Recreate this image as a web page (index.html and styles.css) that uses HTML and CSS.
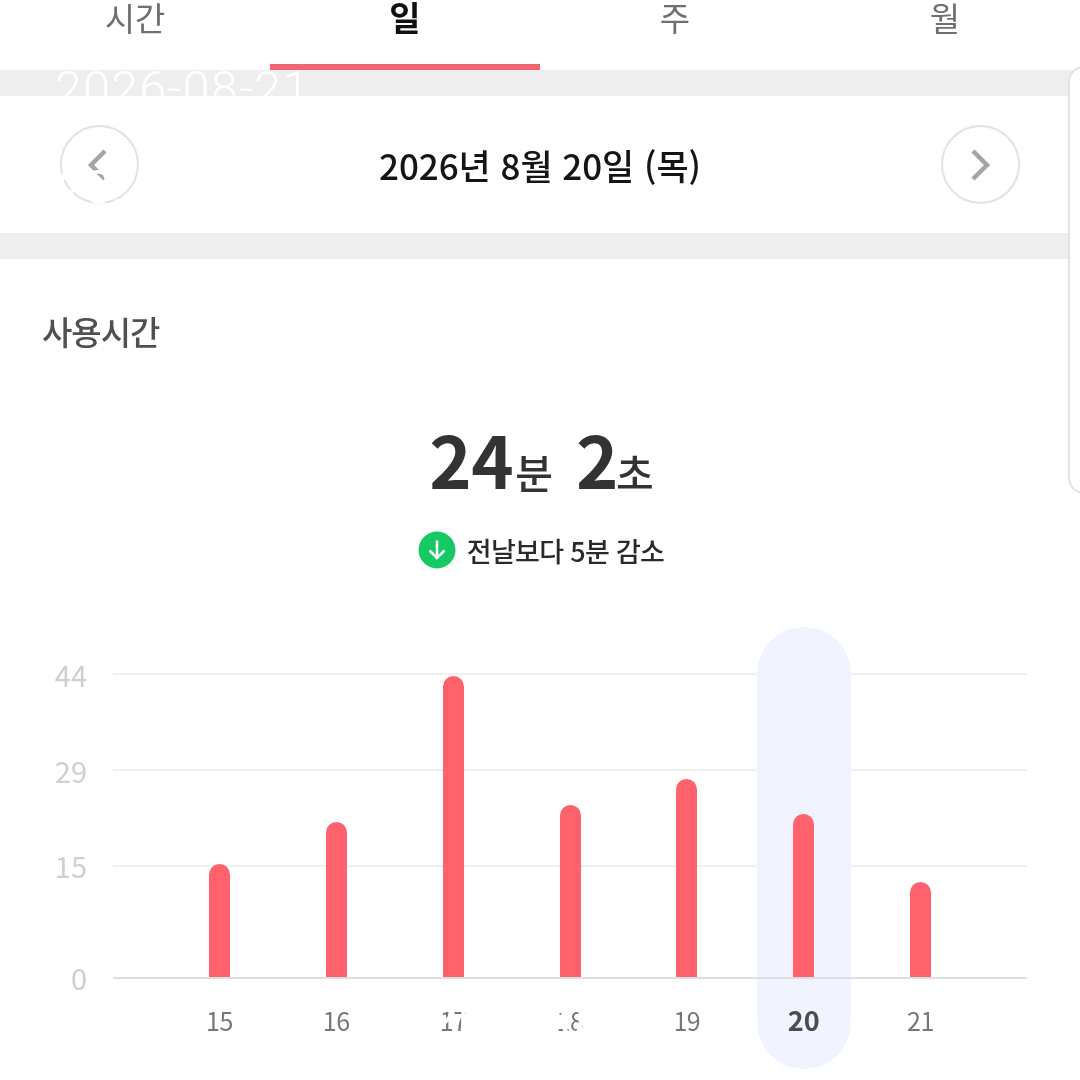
FILE: index.html
```html
<!DOCTYPE html>
<html lang="ko">
<head>
<meta charset="utf-8">
<title>사용시간</title>
<link rel="stylesheet" href="styles.css">
</head>
<body>
<main class="screen">
  <nav class="tabs">
    <div class="tab">시간</div>
    <div class="tab active">일</div>
    <div class="tab">주</div>
    <div class="tab">월</div>
  </nav>
  <div class="band"></div>
  <section class="date-row">
    <button class="nav-btn" aria-label="이전">
      <svg viewBox="0 0 24 32" class="chev chev-left"><path d="M19 2 L5 16 L19 30"/></svg>
    </button>
    <div class="date-text">2026년 8월 20일 (목)</div>
    <button class="nav-btn" aria-label="다음">
      <svg viewBox="0 0 24 32" class="chev"><path d="M5 2 L19 16 L5 30"/></svg>
    </button>
  </section>
  <div class="band"></div>
  <section class="usage">
    <h2 class="usage-title">사용시간</h2>
    <div class="total"><b>24</b><span class="unit-min">분</span> <b class="sec">2</b><span class="unit-sec">초</span></div>
    <div class="delta">
      <svg viewBox="0 0 38 38" class="delta-icon"><circle cx="19" cy="19" r="18.5"/><path d="M19 9.500 V27 M11.500 19.500 L19 27 L26.500 19.500"/></svg>
      <span>전날보다 5분 감소</span>
    </div>
    <div class="chart">
      <div class="y-axis">
        <span class="y-44">44</span>
        <span class="y-29">29</span>
        <span class="y-15">15</span>
        <span class="y-0">0</span>
      </div>
      <div class="plot">
        <div class="grid-line g1"></div>
        <div class="grid-line g2"></div>
        <div class="grid-line g3"></div>
        <div class="grid-line g4"></div>
        <div class="bars">
          <div class="col"><div class="bar-area"><div class="bar" style="height:114px"></div></div><div class="tick">15</div></div>
          <div class="col"><div class="bar-area"><div class="bar" style="height:156px"></div></div><div class="tick">16</div></div>
          <div class="col"><div class="bar-area"><div class="bar" style="height:302px"></div></div><div class="tick">17</div></div>
          <div class="col"><div class="bar-area"><div class="bar" style="height:173px"></div></div><div class="tick">18</div></div>
          <div class="col"><div class="bar-area"><div class="bar" style="height:199px"></div></div><div class="tick">19</div></div>
          <div class="col current"><div class="pill"></div><div class="bar-area"><div class="bar" style="height:164px"></div></div><div class="tick">20</div></div>
          <div class="col"><div class="bar-area"><div class="bar" style="height:96px"></div></div><div class="tick">21</div></div>
        </div>
      </div>
    </div>
  </section>
  <div class="side-panel"></div>
  <div class="wm wm-date">2026-08-21</div>
  <div class="wm wm-time">20:</div>
  <div class="wm wm-low">2026-08-21</div>
</main>
</body>
</html>
```
FILE: styles.css
```css
* { box-sizing: border-box; margin: 0; padding: 0; }
html, body { width: 1080px; height: 1080px; overflow: hidden; background: #fff; }
body { font-family: "Noto Sans CJK KR", "Noto Sans", sans-serif; }
.screen { position: relative; width: 1080px; height: 1080px; overflow: hidden; background: #fff; filter: blur(0.5px); }

.tabs { display: flex; height: 70px; overflow: hidden; }
.tab { flex: 0 0 270px; height: 70px; display: flex; justify-content: center; align-items: flex-start; font-size: 33px; line-height: 34px; color: #6f6f6f; border-bottom: 6px solid transparent; }
.tab.active { color: #111; font-weight: 700; font-size: 34px; border-bottom-color: #ef6672; }

.band { height: 26px; background: #eeeeee; }

.date-row { height: 137px; display: flex; align-items: center; justify-content: space-between; padding: 0 60px; }
.nav-btn { width: 79px; height: 79px; border: 2px solid #e2e2e2; border-radius: 50%; background: #fff; display: flex; align-items: center; justify-content: center; }
.chev { width: 24px; height: 32px; fill: none; stroke: #a5a5a5; stroke-width: 4.500; }
.chev-left { margin-right: 4px; }
.date-text { font-size: 35px; line-height: 38px; font-weight: 500; color: #151515; letter-spacing: -0.05px; }

.usage { height: 821px; padding-top: 47px; }
.usage-title { font-size: 33px; line-height: 50px; font-weight: 500; color: #505050; padding-left: 42px; letter-spacing: -1px; }
.total { margin-top: 62px; padding-left: 3px; display: flex; justify-content: center; align-items: baseline; height: 80px; color: #333; white-space: pre; }
.total b { font-size: 72px; line-height: 80px; font-weight: 700; letter-spacing: -0.5px; }
.total span { font-size: 41px; font-weight: 500; }
.total .unit-min { margin-left: 2px; }
.total .unit-sec { margin-left: -2px; }
.total .sec { margin-left: 23px; }
.delta { margin-top: 30px; padding-left: 2px; display: flex; justify-content: center; align-items: center; gap: 11px; height: 44px; font-size: 27px; font-weight: 500; color: #2a2a2a; letter-spacing: -0.7px; }
.delta-icon { width: 38px; height: 38px; }
.delta-icon circle { fill: #17c964; }
.delta-icon path { fill: none; stroke: #fff; stroke-width: 2.500; }

.chart { display: flex; margin-top: 55px; height: 442px; }
.y-axis { position: relative; width: 113px; color: #cfcfcf; font-size: 29px; }
.y-axis span { position: absolute; right: 26px; line-height: 30px; }
.y-44 { top: 32px; } .y-29 { top: 128px; } .y-15 { top: 223px; } .y-0 { top: 335px; }

.plot { position: relative; width: 914px; height: 442px; padding: 0 48px; }
.grid-line { position: absolute; left: 0; right: 0; height: 2px; background: #f1f1f1; }
.g1 { top: 46px; } .g2 { top: 142px; } .g3 { top: 238px; }
.g4 { top: 350px; background: #dedede; z-index: 2; }

.bars { position: relative; display: flex; height: 100%; }
.col { position: relative; flex: 1 1 0; display: flex; flex-direction: column; align-items: center; }
.pill { position: absolute; top: 0; left: 50%; width: 94px; height: 442px; margin-left: -47px; border-radius: 47px; background: #f1f3fe; }
.bar-area { position: relative; height: 351px; display: flex; align-items: flex-end; z-index: 1; }
.bar { width: 21px; background: #ff616d; border-radius: 10.500px 10.500px 0 0; }
.tick { position: relative; margin-top: 22px; font-size: 25px; line-height: 40px; color: #777; letter-spacing: -0.4px; }
.current .tick { font-size: 27px; font-weight: 700; color: #4c4c50; letter-spacing: 0; }

.side-panel { position: absolute; top: 66px; right: -20px; width: 32px; height: 428px; background: #fff; border: 2px solid #e2e2e2; border-radius: 18px; }

.wm { position: absolute; color: #fff; font-family: Roboto, sans-serif; font-weight: 400; font-size: 48px; line-height: 60px; white-space: nowrap; z-index: 5; }
.wm-date { left: 55px; top: 59px; letter-spacing: 1.5px; font-weight: 300; }
.wm-time { left: 58px; top: 158px; }
.wm-low { left: 430px; top: 990px; letter-spacing: 1.5px; }
```
